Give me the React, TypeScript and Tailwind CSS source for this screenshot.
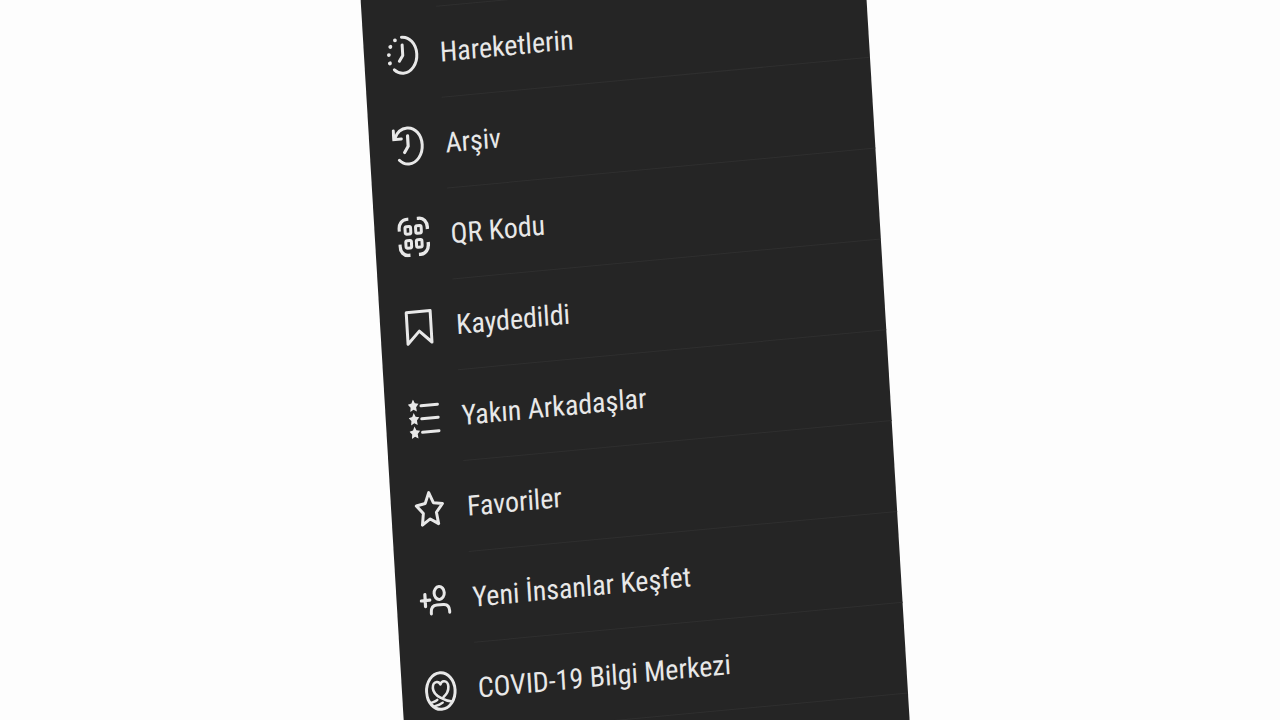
import type { ReactNode } from "react";

const star = (cx: number, cy: number, rx: number, ry: number, inner: number) =>
  Array.from({ length: 10 }, (_, i) => {
    const k = i % 2 === 0 ? 1 : inner;
    const a = (Math.PI * i) / 5;
    return `${(cx + rx * k * Math.sin(a)).toFixed(2)},${(cy - ry * k * Math.cos(a)).toFixed(2)}`;
  }).join(" ");

function Icon({ children }: { children: ReactNode }) {
  return (
    <svg
      aria-hidden="true"
      viewBox="0 0 32 40"
      className="h-10 w-8 shrink-0"
      fill="none"
      stroke="currentColor"
      strokeWidth="3"
      strokeLinecap="round"
      strokeLinejoin="round"
    >
      {children}
    </svg>
  );
}

const items: { label: string; icon: ReactNode }[] = [
  {
    label: "Hareketlerin",
    icon: (
      <>
        <path d="M15.500 2C23.500 2 29.800 10 29.800 20S23.500 38 15.500 38c-3.600 0-6.600-1.600-9-4.200" />
        <path d="M15.700 9.800v10.500l-3.700 5.500" />
        <g fill="currentColor" stroke="none">
          <circle cx="8.800" cy="4.600" r="1.900" />
          <circle cx="3.800" cy="10.600" r="2" />
          <circle cx="1.900" cy="18.600" r="1.900" />
          <circle cx="2.400" cy="27" r="2" />
        </g>
      </>
    ),
  },
  {
    label: "Arşiv",
    icon: (
      <>
        <path d="M2.800 11.500C5.200 5.500 10 2 15.600 2c8 0 14.200 8 14.200 18s-6.200 18-14.200 18c-3.600 0-7-1.700-9.500-4.600" />
        <path d="M1.700 3.600v8.800h7.600" strokeLinejoin="miter" />
        <path d="M15.700 9.800v10.500l-3.900 5.800" strokeWidth="3.200" />
      </>
    ),
  },
  {
    label: "QR Kodu",
    icon: (
      <>
        <path
          d="M1.600 13.500v-2c0-5.500 3.400-9.600 8-9.600h1.900M20 1.900h2c4.600 0 8 4.100 8 9.600v2M30 26.500v2c0 5.500-3.400 9.600-8 9.600h-2M11.500 38.100h-1.900c-4.600 0-8-4.100-8-9.600v-2"
          strokeWidth="3.400"
          strokeLinecap="butt"
        />
        <rect x="7.600" y="9.200" width="5.600" height="7.600" rx="1.500" />
        <rect x="18.200" y="9.200" width="5.600" height="7.600" rx="1.500" />
        <rect x="7.600" y="23.200" width="5.600" height="7.600" rx="1.500" />
        <rect x="18.200" y="23.200" width="5.600" height="7.600" rx="1.500" />
      </>
    ),
  },
  {
    label: "Kaydedildi",
    icon: <path d="M3.800 4h24v31.500L15.800 23.500l-12 12z" strokeLinejoin="round" />,
  },
  {
    label: "Yakın Arkadaşlar",
    icon: (
      <>
        <path d="M13 7h16.500M13 20h16.500M13 33.500h16.500" />
        <g fill="currentColor" stroke="none">
          <polygon points={star(5.3, 6.8, 5.6, 6.8, 0.52)} />
          <polygon points={star(5.3, 20.3, 5.6, 6.8, 0.52)} />
          <polygon points={star(5.3, 33.8, 5.6, 6.8, 0.52)} />
        </g>
      </>
    ),
  },
  {
    label: "Favoriler",
    icon: <polygon points={star(15.5, 20.8, 13.8, 17.6, 0.5)} />,
  },
  {
    label: "Yeni İnsanlar Keşfet",
    icon: (
      <>
        <path d="M5.600 13.500v12M1.600 19.500h8.600" strokeWidth="3.200" />
        <ellipse cx="20" cy="13.200" rx="5.100" ry="6.400" />
        <path d="M11 33.300v-1.500c0-4.600 2.400-6.800 6-6.800h6.400c3.600 0 6 2.200 6 6.800v1.500" />
      </>
    ),
  },
  {
    label: "COVID-19 Bilgi Merkezi",
    icon: (
      <>
        <ellipse cx="15.800" cy="20" rx="14.300" ry="18.300" />
        <path
          d="M26.500 31.500C20.500 30.500 8 24.500 8 16.300c0-3.500 1.800-5.700 4.200-5.700 1.700 0 2.900.9 3.600 2.700.7-1.800 1.900-2.700 3.600-2.700 2.400 0 4.200 2.200 4.200 5.700 0 4.600-2.600 7.700-5.400 9.900"
          strokeWidth="2.600"
        />
        <path d="M5.800 30.800c2.400-.6 4.500-.9 6-2.300M9 34.500c2.800-.3 5.400-.7 8-2.700" strokeWidth="2.400" />
      </>
    ),
  },
];

export default function App() {
  return (
    <main className="flex h-screen items-start justify-center overflow-hidden bg-[#fdfdfd] pr-16">
      <nav
        aria-label="Menü"
        className="-mt-[78px] w-full max-w-[505px] shrink-0 origin-top-left rotate-[-3.42deg] skew-y-[-1.91deg] bg-[#252525] pt-[91px] font-['Roboto_Condensed',Roboto,sans-serif] text-[28px] text-[#e8e8e8]"
      >
        <ul>
          {items.map(({ label, icon }) => (
            <li key={label}>
              <a href="#" className="flex h-[91px] items-stretch">
                <span className="flex w-[75px] shrink-0 items-center pl-[23px]">
                  <Icon>{icon}</Icon>
                </span>
                <span className="flex grow items-center whitespace-nowrap border-t border-[#2f2f2f] pl-px pt-0.5">
                  {label}
                </span>
              </a>
            </li>
          ))}
        </ul>
        <div className="ml-[75px] h-24 border-t border-[#2f2f2f]" />
      </nav>
    </main>
  );
}
